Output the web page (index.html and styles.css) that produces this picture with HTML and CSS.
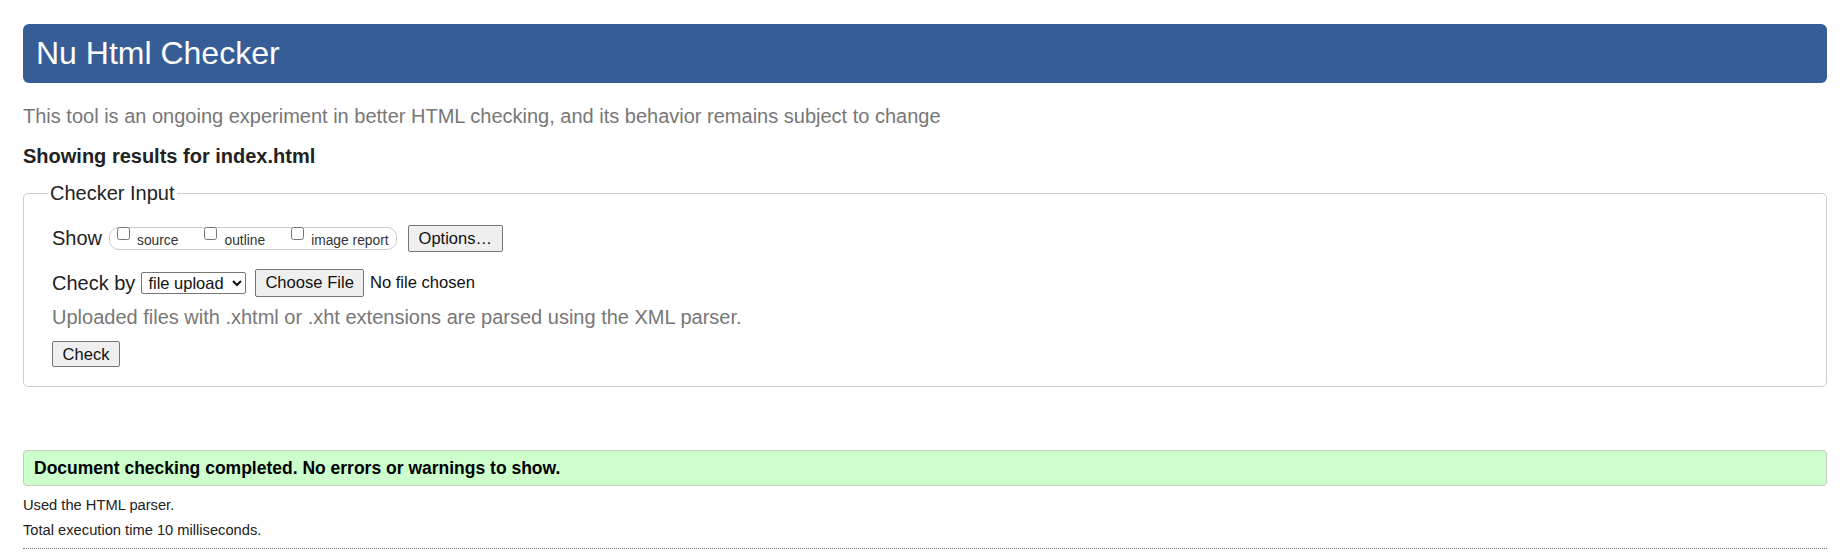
FILE: index.html
```html
<!DOCTYPE html>
<html lang="en">
<head>
<meta charset="utf-8">
<title>Showing results for index.html - Nu Html Checker</title>
<link rel="stylesheet" href="styles.css">
</head>
<body>
<h1 class="title">Nu Html Checker</h1>
<p class="intro">This tool is an ongoing experiment in better HTML checking, and its behavior remains subject to change</p>
<p class="showing">Showing results for index.html</p>
<form class="checker">
  <fieldset class="input-box">
    <legend class="legend">Checker Input</legend>
    <div class="row row-show">
      <span class="row-label">Show</span>
      <fieldset class="pill">
        <label class="opt"><input type="checkbox" class="cb"><span>source</span></label>
        <label class="opt"><input type="checkbox" class="cb"><span>outline</span></label>
        <label class="opt opt-last"><input type="checkbox" class="cb"><span>image report</span></label>
      </fieldset>
      <button type="button" class="btn btn-options">Options…</button>
    </div>
    <div class="row row-by">
      <span class="row-label">Check by</span>
      <select class="sel">
        <option>address</option>
        <option selected>file upload</option>
        <option>text input</option>
      </select>
      <button type="button" class="btn btn-file">Choose File</button>
      <span class="nofile">No file chosen</span>
    </div>
    <p class="hint">Uploaded files with .xhtml or .xht extensions are parsed using the XML parser.</p>
    <div class="row row-submit">
      <button type="button" class="btn btn-check">Check</button>
    </div>
  </fieldset>
</form>
<p class="success">Document checking completed. No errors or warnings to show.</p>
<p class="stat">Used the HTML parser.</p>
<p class="stat stat-time">Total execution time 10 milliseconds.</p>
<hr class="dots">
</body>
</html>
```
FILE: styles.css
```css
html, body {
  background: #fff;
}
body {
  margin: 0;
  padding: 24px 14px 0 23px;
  font-family: "Liberation Sans", Arial, Helvetica, sans-serif;
  color: #222;
}
.title {
  margin: 0;
  padding: 11px 13px;
  line-height: 37px;
  font-size: 32px;
  font-weight: normal;
  color: #fff;
  background: #365d95;
  border-radius: 6px;
}
.intro {
  margin: 22px 0 0;
  font-size: 20px;
  line-height: 23px;
  color: #777;
}
.showing {
  margin: 17px 0 0;
  font-size: 20px;
  line-height: 23px;
  font-weight: bold;
  color: #222;
}
.checker {
  margin: 14px 0 0;
}
.input-box {
  margin: 0;
  padding: 20px 24px 19px 28px;
  border: 1px solid #ccc;
  border-radius: 5px;
}
.legend {
  margin-left: -4px;
  padding: 0 2px;
  font-size: 20px;
  line-height: 23px;
  color: #222;
}
.row {
  display: flex;
  align-items: center;
}
.row-label {
  font-size: 20px;
  line-height: 23px;
  color: #222;
}
.row-show {
  height: 27px;
}
.pill {
  display: flex;
  align-items: center;
  margin: 0 0 0 7px;
  padding: 0 7px;
  height: 21px;
  border: 1px solid #ccc;
  border-radius: 10px;
  min-inline-size: 0;
}
.opt {
  display: flex;
  align-items: center;
  height: 21px;
  margin-right: 26px;
  font-size: 13.8px;
  color: #333;
}
.opt-last {
  margin-right: 0;
}
.cb {
  align-self: flex-start;
  width: 13px;
  height: 13px;
  margin: -1px 7px 0 0;
}
.opt span {
  padding-top: 3px;
}
.btn {
  font-family: "Liberation Sans", Arial, Helvetica, sans-serif;
  color: #111;
  background: #efefef;
  border: 1px solid #767676;
  border-radius: 2px;
}
.btn-options {
  margin-left: 11px;
  height: 27px;
  padding: 0 10px;
  font-size: 16.5px;
}
.row-by {
  margin-top: 17px;
  height: 28px;
}
.sel {
  margin-left: 6px;
  height: 22px;
  font-family: "Liberation Sans", Arial, Helvetica, sans-serif;
  font-size: 16.5px;
  color: #111;
  background: #fff;
  border: 1px solid #767676;
  border-radius: 2px;
  padding: 0 5px 0 2px;
}
.btn-file {
  margin-left: 9px;
  height: 28px;
  padding: 0 9px;
  font-size: 16.6px;
}
.nofile {
  margin-left: 6px;
  font-size: 16.6px;
  color: #111;
}
.hint {
  margin: 9px 0 0;
  font-size: 20px;
  line-height: 23px;
  color: #777;
}
.row-submit {
  margin-top: 12px;
}
.btn-check {
  height: 26px;
  width: 68px;
  padding: 0;
  font-size: 16.5px;
}
.success {
  margin: 63px 0 0;
  padding: 0 10px;
  height: 34px;
  line-height: 34px;
  font-size: 17.5px;
  font-weight: bold;
  color: #000;
  background: #ccffcc;
  border: 1px solid #c8c8c8;
  border-radius: 4px;
}
.stat {
  margin: 11px 0 0;
  font-size: 14.7px;
  line-height: 17px;
  color: #222;
}
.stat-time {
  margin-top: 8px;
}
.dots {
  margin: 9px 0 0;
  height: 0;
  border: 0;
  border-top: 1px dotted #777;
}
```
